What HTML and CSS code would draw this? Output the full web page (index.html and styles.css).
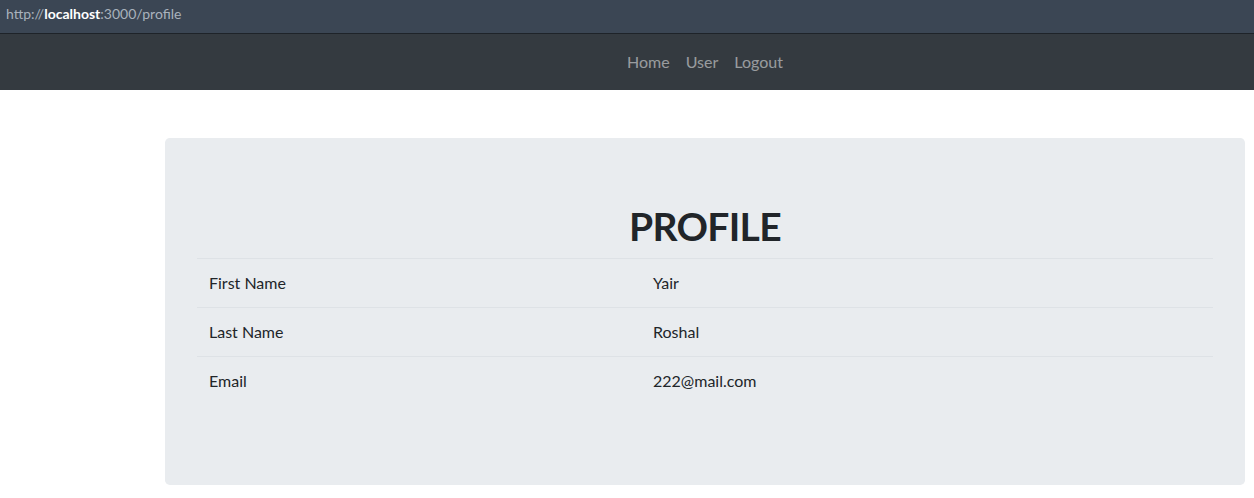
FILE: index.html
```html
<!DOCTYPE html>
<html lang="en">
<head>
<meta charset="utf-8">
<title>Profile</title>
<link rel="stylesheet" href="styles.css">
</head>
<body>
<div class="urlbar"><span class="dim">http://</span><span class="host">localhost</span><span class="dim">:3000/profile</span></div>
<nav class="navbar">
  <ul class="nav">
    <li><a href="#">Home</a></li>
    <li><a href="#">User</a></li>
    <li><a href="#">Logout</a></li>
  </ul>
</nav>
<main class="main">
  <section class="jumbotron">
    <h1 class="title">PROFILE</h1>
    <div class="table">
      <div class="row"><div class="cell label">First Name</div><div class="cell">Yair</div></div>
      <div class="row"><div class="cell label">Last Name</div><div class="cell">Roshal</div></div>
      <div class="row"><div class="cell label">Email</div><div class="cell">222@mail.com</div></div>
    </div>
  </section>
</main>
</body>
</html>
```

FILE: styles.css
```css
html, body {
  margin: 0;
  padding: 0;
  background: #ffffff;
  font-family: "Segoe UI", Lato, "Noto Sans", sans-serif;
  color: #212529;
}

.urlbar {
  height: 34px;
  box-sizing: border-box;
  background: #3b4654;
  border-bottom: 1px solid #1e2329;
  padding: 5px 6px 0;
  font-family: "Segoe UI", Lato, sans-serif;
  font-size: 14px;
  line-height: 18px;
}
.urlbar .dim { color: #a9b2bc; }
.urlbar .host { color: #ffffff; font-weight: 700; }

.navbar {
  background: #343a40;
  height: 56px;
  padding: 0 9px 0 165px;
  display: flex;
  align-items: center;
  justify-content: center;
}
.nav {
  list-style: none;
  margin: 0;
  padding: 0;
  display: flex;
}
.nav a {
  display: block;
  padding: 8px 8px;
  font-size: 16px;
  line-height: 24px;
  color: rgba(255, 255, 255, 0.5);
  text-decoration: none;
}

.main {
  padding: 48px 9px 0 165px;
}
.jumbotron {
  background: #e9ecef;
  border-radius: 4.8px;
  padding: 64px 32px;
}
.title {
  margin: 0 0 8px;
  text-align: center;
  font-size: 39px;
  line-height: 48px;
  font-weight: 700;
  letter-spacing: -0.7px;
  color: #212529;
}
.table {
  margin-bottom: 16px;
  font-size: 16px;
  line-height: 24px;
}
.row {
  display: grid;
  grid-template-columns: 444px 1fr;
  border-top: 1px solid #dee2e6;
}
.cell {
  padding: 12px;
}
```
